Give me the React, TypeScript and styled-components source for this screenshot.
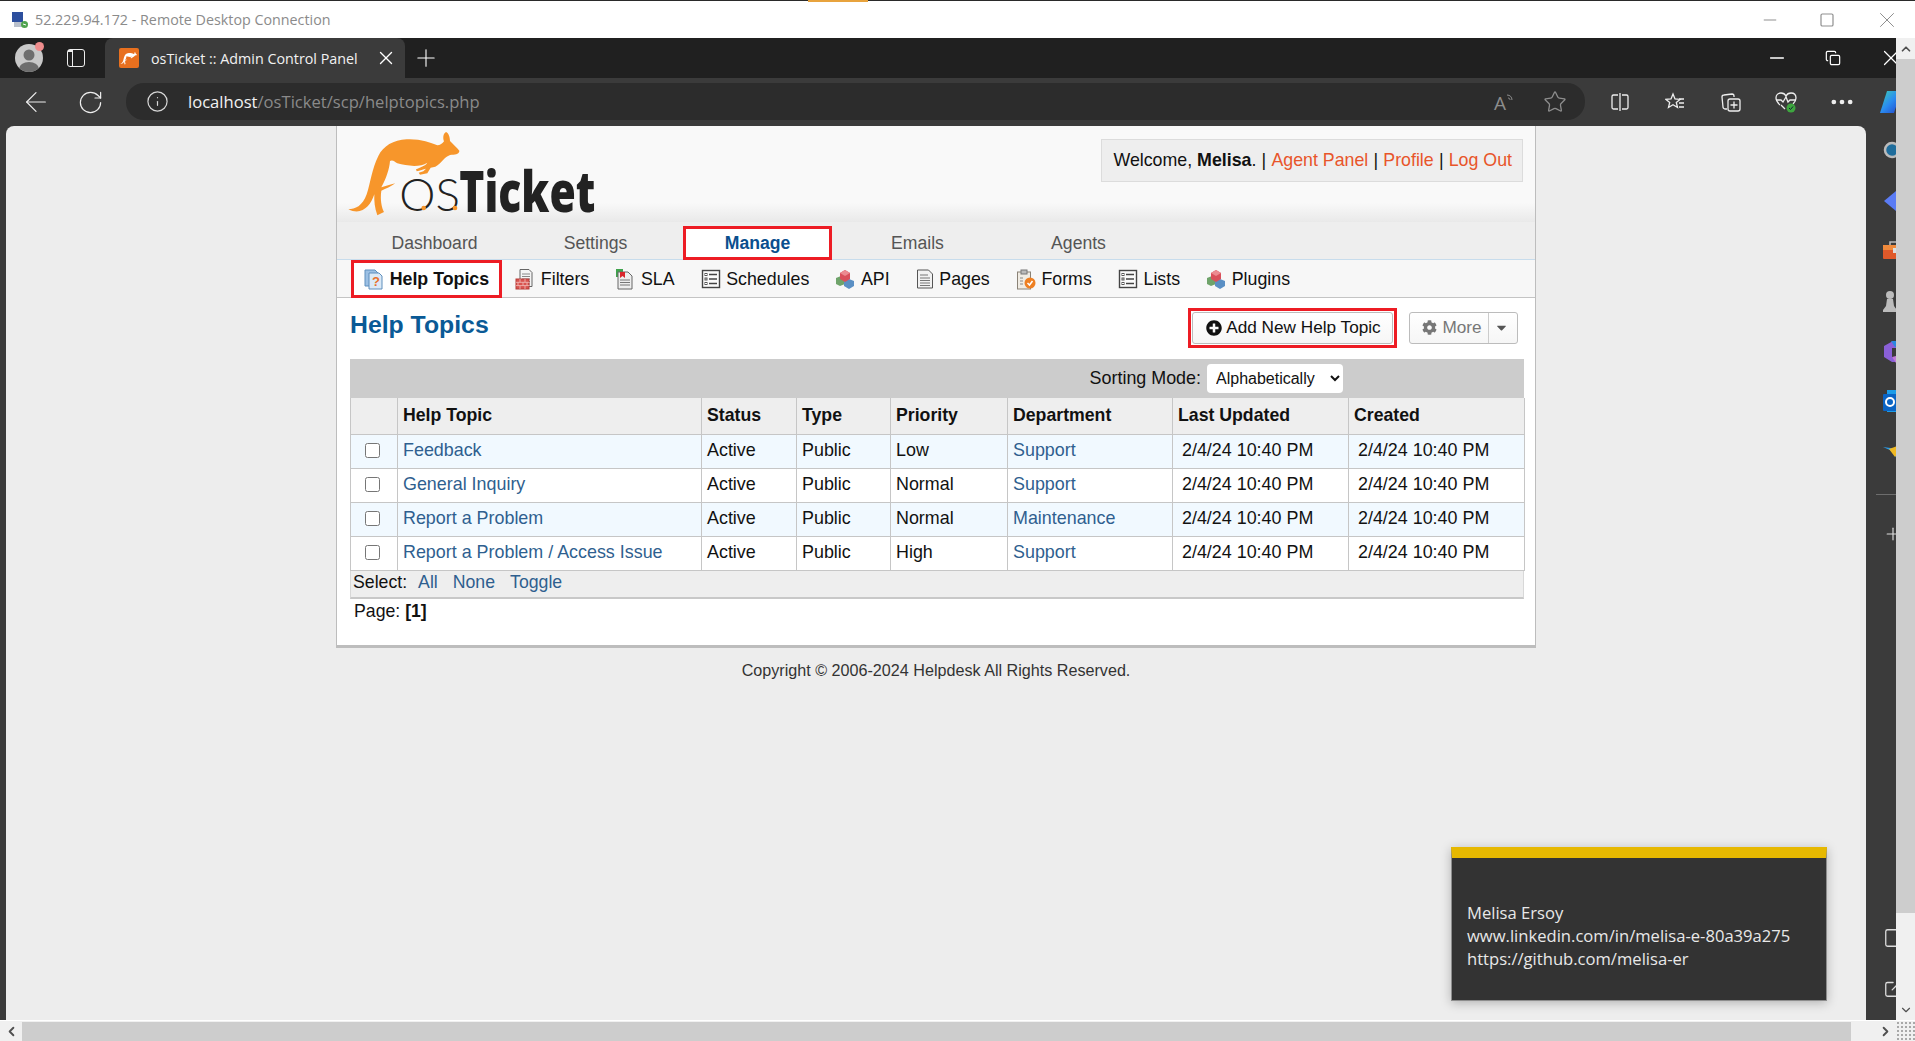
import React from "react";
import styled, { createGlobalStyle } from "styled-components";
import { ArrowLeft, RotateCw, Info, Star, Plus, X, Minus, Square, Copy, ExternalLink, MoreHorizontal, ChevronUp, ChevronDown, ChevronLeft, ChevronRight } from "lucide-react";
import { FaPlusCircle, FaCog, FaCaretDown } from "react-icons/fa";

const GlobalStyle = createGlobalStyle`
  html, body { margin: 0; padding: 0; overflow: hidden; background: #fff; }
  * { box-sizing: border-box; }
`;

const ARIAL = `"Liberation Sans", Arial, sans-serif`;
const SEGOE = `"Open Sans", "Noto Sans", sans-serif`;
const RED = "#ed1c24";
const ROO = "M25 250 C45 250 68 240 80 205 C92 170 95 130 115 90 C130 60 160 42 200 40 C240 38 270 50 292 58 C300 58 308 52 312 46 C308 35 310 22 318 18 C326 20 330 35 330 45 C340 55 350 65 358 74 C358 82 350 86 335 86 C322 88 312 98 300 112 C290 122 282 125 272 125 L262 142 L240 146 L236 140 L250 136 L258 128 C250 130 240 134 230 136 L228 130 C240 124 256 120 262 110 C240 125 200 120 172 112 C165 108 158 100 150 105 C148 130 138 158 124 184 C138 180 150 176 166 172 C152 182 138 188 124 194 C120 220 125 245 132 258 L112 268 C104 245 102 225 103 205 C92 240 65 270 25 250 Z";

const Screen = styled.div`
  width: 1915px;
  height: 1041px;
  display: flex;
  flex-direction: column;
  overflow: hidden;
  position: relative;
  font-family: ${ARIAL};
`;

const TitleBar = styled.div`
  height: 38px;
  flex: none;
  background: #fff;
  border-top: 1px solid #2a2a2a;
  display: flex;
  align-items: center;
  padding: 0 15px 0 11px;
  color: #8b8b8b;
  font-family: ${SEGOE};
  font-size: 14.3px;
  position: relative;
  svg { flex: none; }
`;

const TopGlow = styled.div`
  position: absolute;
  left: 808px;
  top: -1px;
  width: 60px;
  height: 2px;
  background: #e8a33d;
`;

const TitleText = styled.span`
  margin-left: 6px;
  flex: 1;
`;

const WinButtons = styled.div<{ $gap: number; $color: string }>`
  display: flex;
  align-items: center;
  gap: ${(p) => p.$gap}px;
  color: ${(p) => p.$color};
`;

const Middle = styled.div`
  flex: 1;
  display: flex;
  min-height: 0;
`;

const Browser = styled.div`
  flex: 1;
  display: flex;
  flex-direction: column;
  min-width: 0;
  background: #3b3b3b;
`;

const TabStrip = styled.div`
  height: 40px;
  flex: none;
  background: #202020;
  display: flex;
  align-items: center;
  padding-left: 15px;
  color: #fff;
`;

const Avatar = styled.div`
  width: 28px;
  height: 28px;
  border-radius: 50%;
  background: #c9c9c9;
  position: relative;
  overflow: visible;
  flex: none;
  svg { display: block; border-radius: 50%; }
`;

const AvatarDot = styled.span`
  position: absolute;
  right: -1px;
  top: -2px;
  width: 9px;
  height: 9px;
  border-radius: 50%;
  background: #ef8d8d;
`;

const TabsIcon = styled.div`
  width: 18px;
  height: 18px;
  margin-left: 24px;
  border: 1.5px solid #eee;
  border-radius: 3px;
  position: relative;
  flex: none;
  &::before {
    content: "";
    position: absolute;
    left: 0;
    top: 0;
    bottom: 0;
    width: 4px;
    border-right: 1.5px solid #eee;
    border-top: 2px solid #eee;
  }
`;

const Tab = styled.div`
  width: 300px;
  height: 40px;
  margin-left: 20px;
  background: #3b3b3b;
  border-radius: 8px 8px 0 0;
  display: flex;
  align-items: center;
  padding-left: 14px;
  font-family: ${SEGOE};
  font-size: 14.3px;
  flex: none;
`;

const Favicon = styled.div`
  width: 20px;
  height: 20px;
  background: #e8701f;
  border-radius: 2px;
  margin-right: 12px;
  display: flex;
  flex: none;
`;

const TabLabel = styled.span`
  flex: 1;
  color: #f2f2f2;
  white-space: nowrap;
`;

const TabClose = styled.span`
  margin-right: 8px;
  display: flex;
`;

const NewTab = styled.span`
  margin-left: 7px;
  display: flex;
`;

const StripEnd = styled.div`
  flex: 1;
  display: flex;
  justify-content: flex-end;
  overflow: visible;
  margin-right: -8px;
`;

const Toolbar = styled.div`
  height: 48px;
  flex: none;
  display: flex;
  align-items: center;
  color: #eee;
  padding-left: 20px;
  overflow: hidden;
`;

const ToolSlot = styled.span<{ $w: number }>`
  width: ${(p) => p.$w}px;
  flex: none;
  display: flex;
  align-items: center;
`;

const AddressPill = styled.div`
  width: 1459px;
  height: 37px;
  margin-top: -1px;
  flex: none;
  border-radius: 18px;
  background: #2c2c2c;
  display: flex;
  align-items: center;
  padding-left: 20px;
  color: #d8d8d8;
  font-family: ${SEGOE};
  font-size: 16.6px;
`;

const Url = styled.span`
  margin-left: 19px;
  flex: 1;
  color: #8a8a8a;
  strong { color: #f2f2f2; font-weight: 400; }
`;

const PillIcons = styled.div`
  display: flex;
  align-items: center;
  gap: 27px;
  margin-right: 18px;
  color: #8d8d8d;
  svg { overflow: visible; }
`;

const ToolIcons = styled.div`
  display: flex;
  align-items: center;
  margin-left: 7px;
  color: #eee;
  flex: none;
`;

const ToolCell = styled.span`
  width: 55.500px;
  flex: none;
  display: flex;
  align-items: center;
  justify-content: center;
`;

const CopilotSlot = styled.span`
  margin-left: 9px;
  display: flex;
  flex: none;
`;

const Workspace = styled.div`
  flex: 1;
  display: flex;
  min-height: 0;
`;

const Content = styled.main`
  margin-left: 6px;
  width: 1860px;
  flex: none;
  background: #ededed;
  border-radius: 8px 8px 0 0;
  position: relative;
  overflow: hidden;
`;

const Panel = styled.div`
  width: 1200px;
  margin-left: 330px;
  background: #fff;
  border-left: 1px solid #bdbdbd;
  border-right: 1px solid #bdbdbd;
  border-bottom: 3px solid #bdbdbd;
  height: 522px;
`;

const PanelHeader = styled.header`
  height: 96px;
  background: linear-gradient(#f9f9f9 0, #f9f9f9 80%, #e9e9e9 100%);
  display: flex;
  justify-content: space-between;
  align-items: flex-start;
  padding: 0 12px 0 3px;
`;

const LogoSvg = styled.svg`
  width: 270px;
  height: 96px;
  flex: none;
  overflow: visible;
`;

const Welcome = styled.div`
  margin-top: 13px;
  height: 43px;
  background: #eee;
  border: 1px solid #dcdcdc;
  padding: 0 10px 0 11px;
  display: flex;
  align-items: center;
  gap: 5.200px;
  font-size: 17.8px;
  color: #111;
  white-space: pre;
  a { color: #e8552a; text-decoration: none; }
`;

const Nav = styled.nav`
  height: 38px;
  background: #eee;
  border-bottom: 1px solid #c7dcec;
  display: flex;
  padding-left: 17px;
`;

const NavItem = styled.div<{ $active?: boolean }>`
  flex: none;
  width: ${(p) => (p.$active ? 149 : 161)}px;
  height: ${(p) => (p.$active ? 34 : 38)}px;
  margin: ${(p) => (p.$active ? "4px 5px 0 7px" : "0")};
  padding-top: ${(p) => (p.$active ? 0 : 4)}px;
  background: ${(p) => (p.$active ? "#fff" : "transparent")};
  border: ${(p) => (p.$active ? `3px solid ${RED}` : "none")};
  color: ${(p) => (p.$active ? "#0a4f8e" : "#555")};
  font-weight: ${(p) => (p.$active ? 700 : 400)};
  font-size: 17.6px;
  display: flex;
  align-items: center;
  justify-content: center;
`;

const SubNav = styled.nav`
  height: 38px;
  background: #f7f7f7;
  border-bottom: 1px solid #c4c4c4;
  display: flex;
  padding-left: 14px;
`;

const SubItem = styled.div<{ $active?: boolean }>`
  display: flex;
  align-items: center;
  gap: 5.700px;
  height: 38px;
  padding: 0 10px;
  border: 3px solid ${(p) => (p.$active ? RED : "transparent")};
  background: ${(p) => (p.$active ? "#fff" : "transparent")};
  font-size: 17.8px;
  font-weight: ${(p) => (p.$active ? 700 : 400)};
  color: #111;
  svg { flex: none; }
`;

const Body = styled.div`
  padding: 0 11px 0 13px;
`;

const TitleRow = styled.div`
  height: 61px;
  display: flex;
  align-items: center;
  padding: 0 6px 2px 0;
`;

const Heading = styled.h1`
  margin: 0 auto 6px 0;
  font-size: 24.8px;
  line-height: 30px;
  color: #0a5a96;
  font-weight: 700;
`;

const AddFrame = styled.div`
  border: 3px solid ${RED};
  padding: 1px;
  margin-right: 12px;
  background: #fff;
`;

const ActionButton = styled.button`
  height: 32px;
  border: 1px solid #bcbcbc;
  border-radius: 3px;
  background: linear-gradient(#fff, #f6f6f6);
  font-family: ${ARIAL};
  font-size: 17.2px;
  display: flex;
  align-items: center;
  padding: 0;
`;

const AddButton = styled(ActionButton)`
  width: 201px;
  justify-content: center;
  gap: 4px;
  color: #111;
  padding-left: 2px;
`;

const MoreButton = styled(ActionButton)`
  width: 109px;
  color: #777;
`;

const MoreLabel = styled.span`
  width: 79px;
  height: 100%;
  display: flex;
  align-items: center;
  justify-content: center;
  gap: 5px;
  padding-left: 6px;
  border-right: 1px solid #ccc;
`;

const MoreCaret = styled.span`
  flex: 1;
  display: flex;
  justify-content: center;
  padding-right: 4px;
  color: #555;
`;

const SortBar = styled.div`
  height: 39px;
  background: #ccc;
  display: flex;
  align-items: center;
  justify-content: flex-end;
  gap: 6px;
  padding-right: 181px;
  font-size: 17.9px;
  color: #111;
`;

const SortSelect = styled.select`
  width: 136px;
  height: 29px;
  border: none;
  border-radius: 4px;
  background: #fff;
  font-family: ${ARIAL};
  font-size: 16px;
  color: #111;
  padding-left: 5px;
`;

const Table = styled.table`
  width: 1174px;
  table-layout: fixed;
  border-collapse: collapse;
  font-size: 17.9px;
  color: #111;
`;

const Th = styled.th`
  height: 36px;
  background: #eee;
  border: 1px solid #c6c6c6;
  border-top: none;
  text-align: left;
  padding: 0 5px;
  font-size: 17.7px;
  font-weight: 700;
`;

const Tr = styled.tr<{ $tint?: boolean }>`
  background: ${(p) => (p.$tint ? "#f1f9ff" : "#fff")};
`;

const Td = styled.td<{ $inset?: boolean }>`
  height: 34px;
  border: 1px solid #c6c6c6;
  padding: 0 0 1px ${(p) => (p.$inset ? 9 : 5)}px;
  white-space: nowrap;
`;

const CheckCell = styled.td`
  height: 34px;
  border: 1px solid #c6c6c6;
  text-align: center;
  padding: 0 4px 0 0;
  input { width: 15px; height: 15px; margin: 3px 0 0; display: inline-block; }
`;

const CellLink = styled.a`
  color: #2f5f8f;
  text-decoration: none;
`;

const SelectBar = styled.div`
  height: 28px;
  background: #eee;
  border: 1px solid #d8d8d8;
  border-top: none;
  border-bottom: 2px solid #c8c8c8;
  display: flex;
  align-items: center;
  padding: 0 0 2px 2px;
  font-size: 17.7px;
  color: #111;
`;

const SelectLink = styled(CellLink)<{ $left: number }>`
  margin-left: ${(p) => p.$left}px;
`;

const Pager = styled.div`
  padding: 0 0 0 4px;
  font-size: 17.7px;
  line-height: 24px;
  color: #111;
`;

const Copyright = styled.footer`
  width: 1200px;
  margin: 12px 0 0 330px;
  text-align: center;
  font-size: 16.150px;
  line-height: 20px;
  color: #333;
`;

const Toast = styled.aside`
  position: absolute;
  right: 39px;
  bottom: 19px;
  width: 376px;
  height: 154px;
  background: #333;
  border: 1px solid #8d8d8d;
  border-top: 11px solid #e6b800;
  box-shadow: 0 2px 10px rgba(0, 0, 0, 0.25);
  padding: 43px 0 0 15px;
  color: #e8e8e8;
  font-family: ${SEGOE};
  font-size: 16.6px;
  line-height: 23px;
  white-space: nowrap;
`;

const Sidebar = styled.aside`
  flex: 1;
  display: flex;
  flex-direction: column;
  align-items: flex-start;
  padding: 13px 0 21px 17px;
  gap: 24px;
  overflow: hidden;
  color: #ddd;
  min-width: 0;
  svg { flex: none; display: block; }
`;

const SideRule = styled.div`
  width: 20px;
  height: 1px;
  flex: none;
  background: #6d6d6d;
  margin: 5px 0 5px -7px;
`;

const SidePush = styled.div`
  margin-top: auto;
  display: flex;
  flex-direction: column;
  gap: 28px;
`;

const VScroll = styled.div`
  width: 19px;
  flex: none;
  background: #f0f0f0;
  display: flex;
  flex-direction: column;
  align-items: center;
  color: #505050;
`;

const ScrollArrow = styled.div`
  height: 21px;
  flex: none;
  display: flex;
  align-items: center;
  justify-content: center;
`;

const VThumb = styled.div`
  width: 100%;
  height: 854px;
  background: #cdcdcd;
`;

const VSpace = styled.div`
  flex: 1;
`;

const HScroll = styled.div`
  height: 21px;
  flex: none;
  background: #f0f0f0;
  border-top: 1px solid #fff;
  display: flex;
  align-items: center;
  color: #505050;
`;

const HThumb = styled.div`
  width: 1829px;
  height: 19px;
  background: #cdcdcd;
`;

const HArrow = styled.div`
  width: 22px;
  flex: none;
  display: flex;
  align-items: center;
  justify-content: center;
`;

const HArrowEnd = styled.div`
  width: 45px;
  flex: none;
  display: flex;
  justify-content: flex-end;
  padding-right: 3px;
`;

const Grip = styled.div`
  flex: 1;
  height: 100%;
  background-image: radial-gradient(#a8a8a8 1.2px, transparent 1.4px);
  background-size: 4px 4px;
`;

const Logo = () => (
  <LogoSvg viewBox="0 0 810 288">
    <path d={ROO} fill="#f7962b" />
    <text x="178" y="256" fontFamily="Lato, sans-serif" fontWeight="300" fontSize="134" fill="#222" textLength="182" lengthAdjust="spacingAndGlyphs">OS</text>
    <circle cx="251" cy="246" r="7" fill="#f7962b" />
    <circle cx="345" cy="246" r="7" fill="#f7962b" />
    <text x="358" y="258" fontFamily="Open Sans, sans-serif" fontWeight="800" fontSize="170" fill="#222" textLength="408" lengthAdjust="spacingAndGlyphs">Ticket</text>
  </LogoSvg>
);

const DocBase = () => (
  <>
    <path d="M5 1.5h9l3 3v14H5z" fill="#f4f4f4" stroke="#666" />
    <path d="M7 6h8M7 8.5h8M7 11h8M7 13.5h8M7 16h8" stroke="#888" />
  </>
);

const HelpIcon = () => (
  <svg width="20" height="22" viewBox="0 0 20 22">
    <path d="M1 2h10l3 3v13H1z" fill="#9cc0e4" stroke="#5f8fbd" />
    <path d="M5 5h10l3 3v13H5z" fill="#dbe9f6" stroke="#5f8fbd" />
    <text x="8" y="18" fontFamily="Liberation Sans, sans-serif" fontWeight="700" fontSize="13" fill="#e8702a">?</text>
  </svg>
);

const FilterIcon = () => (
  <svg width="20" height="22" viewBox="0 0 20 22">
    <DocBase />
    <rect x="1" y="11" width="13" height="10" fill="#d9534f" stroke="#b53c38" />
    <path d="M1 14.3h13M1 17.6h13M5 11v3.3M10 11v3.3M3 14.3v3.3M8 14.3v3.3M12 14.3v3.3M5 17.6V21M10 17.6V21" stroke="#f2c0bd" strokeWidth=".8" />
  </svg>
);

const SlaIcon = () => (
  <svg width="20" height="22" viewBox="0 0 20 22">
    <path d="M1 1h7v8H1z" fill="#3fa34d" />
    <path d="M3 4h10l4 4v13H3z" fill="#eee" stroke="#666" />
    <path d="M5 12h10M5 14.5h10M5 17h10" stroke="#777" />
    <path d="M5 4h5v6l-2.500-2L5 10z" fill="#d9262c" />
  </svg>
);

const ListIcon = () => (
  <svg width="20" height="20" viewBox="0 0 20 20">
    <rect x="1.500" y="1.500" width="17" height="17" fill="#fafafa" stroke="#444" strokeWidth="1.400" />
    <path d="M8 5.500h8M8 10h8M8 14.500h8" stroke="#444" strokeWidth="1.400" />
    <rect x="4" y="4.500" width="2" height="2" fill="none" stroke="#555" />
    <rect x="4" y="9" width="2" height="2" fill="none" stroke="#555" />
    <rect x="4" y="13.500" width="2" height="2" fill="none" stroke="#555" />
  </svg>
);

const CubesIcon = () => (
  <svg width="20" height="20" viewBox="0 0 20 20">
    <path d="M1 9l5-2 4 2v6l-5 2-4-2z" fill="#6fa36a" />
    <path d="M9 12l5-2 5 2v5l-5 3-5-3z" fill="#5a8fc4" />
    <path d="M5 4l5-3 5 3v6l-5 3-5-3z" fill="#d9505a" />
    <path d="M5 4l5 3 5-3-5-3z" fill="#ec8b90" />
  </svg>
);

const PageIcon = () => (
  <svg width="18" height="20" viewBox="0 0 18 20">
    <path d="M1.500 1h11l4 4v14h-15z" fill="#f2f2f2" stroke="#555" />
    <path d="M4 6h8M4 9h10M4 11.500h10M4 14h10M4 16.500h10" stroke="#777" />
  </svg>
);

const FormIcon = () => (
  <svg width="20" height="21" viewBox="0 0 20 21">
    <rect x="1.500" y="3" width="13" height="17" fill="#f0ece4" stroke="#8a8276" />
    <rect x="5" y="1" width="6" height="4" fill="#bbb" stroke="#777" />
    <path d="M4 9h3M4 12h3M4 15h3" stroke="#888" />
    <circle cx="14" cy="14" r="5.500" fill="#ee7f22" />
    <path d="M11.500 14l2 2 3-4" stroke="#fff" strokeWidth="1.500" fill="none" />
  </svg>
);

const ReadAloud = () => (
  <svg width="22" height="20" viewBox="0 0 22 20" fill="none" stroke="currentColor">
    <text x="0" y="18" fontFamily="Open Sans, sans-serif" fontSize="19" fill="currentColor" stroke="none">A</text>
    <path d="M13 3c3 0 5 2 5 5M14 6c1.500 0 2 1 2 2" />
  </svg>
);

const SplitIcon = () => (
  <svg width="20" height="20" viewBox="0 0 20 20" fill="none" stroke="currentColor" strokeWidth="1.300">
    <path d="M8 3H3.500A1.500 1.500 0 0 0 2 4.500v11A1.500 1.500 0 0 0 3.500 17H8M12 3h4.500A1.500 1.500 0 0 1 18 4.500v11a1.500 1.500 0 0 1-1.500 1.500H12M10 1v18" />
  </svg>
);

const FavIcon = () => (
  <svg width="20" height="20" viewBox="0 0 20 20" fill="none" stroke="currentColor" strokeWidth="1.300">
    <path d="M8 2l2 5 5 .4-3.700 3.100 1.200 5L8 12.800 3.500 15.500l1.200-5L1 7.400 6 7z" />
    <path d="M14 7h5M14 11h5M14 15h5" />
  </svg>
);

const CollectionIcon = () => (
  <svg width="20" height="20" viewBox="0 0 20 20" fill="none" stroke="currentColor" strokeWidth="1.300">
    <path d="M6 17H4a2 2 0 0 1-2-2L1 5a2 2 0 0 1 2-2l8-1a2 2 0 0 1 2 2v1" />
    <rect x="7" y="7" width="12" height="12" rx="2" />
    <path d="M13 9.500v7M9.500 13h7" />
  </svg>
);

const HealthIcon = () => (
  <svg width="22" height="22" viewBox="0 0 22 22" fill="none" stroke="currentColor" strokeWidth="1.300">
    <path d="M5 14C2 11 1 9 1 7c0-3 2-5 5-5 2 0 4 1 5 3 1-2 3-3 5-3 3 0 5 2 5 5 0 2-1 4-3 6" />
    <path d="M1 9h5l2 2 3-5 2 5 2-2h5M6 14l4 4" />
    <circle cx="16" cy="17" r="4.500" fill="#3ea63f" stroke="none" />
    <path d="M14 17l1.500 1.500 2.500-3" stroke="#123" strokeWidth="1" />
  </svg>
);

const CopilotIcon = () => (
  <svg width="26" height="26" viewBox="0 0 26 26">
    <defs>
      <linearGradient id="cop" x1="0" y1="0" x2="1" y2="1">
        <stop offset="0" stopColor="#3fd0b0" />
        <stop offset="0.5" stopColor="#2a8cf0" />
        <stop offset="1" stopColor="#2340c8" />
      </linearGradient>
    </defs>
    <path d="M8 2h14l-7 22H1z" fill="url(#cop)" />
  </svg>
);

const SideSearch = () => (
  <svg width="26" height="26" viewBox="0 0 26 26">
    <circle cx="9" cy="11" r="7" fill="#1f6d9c" stroke="#bbb" strokeWidth="2.500" />
    <path d="M14 16l6 6" stroke="#a070d0" strokeWidth="3" />
  </svg>
);

const SideDiamond = () => (
  <svg width="26" height="26" viewBox="0 0 26 26">
    <path d="M1 12L13 2l10 10-10 10z" fill="#5b7cf5" />
  </svg>
);

const SideToolbox = () => (
  <svg width="26" height="26" viewBox="0 0 26 26">
    <path d="M7 7V3h12v4" fill="none" stroke="#bbb" strokeWidth="1.500" />
    <rect x="0" y="6" width="26" height="14" rx="1" fill="#e0592a" />
    <rect x="0" y="6" width="26" height="5" fill="#f08a3c" />
    <rect x="10" y="9" width="3" height="5" fill="#ddd" />
  </svg>
);

const SidePawn = () => (
  <svg width="26" height="26" viewBox="0 0 26 26">
    <circle cx="7" cy="6" r="4" fill="#bcbcbc" />
    <path d="M4 10h6l1 7 3 4v2H0v-2l3-4z" fill="#bcbcbc" />
    <path d="M14 2v6" stroke="#a070d0" strokeWidth="2" />
  </svg>
);

const SideCopilot = () => (
  <svg width="26" height="26" viewBox="0 0 26 26">
    <path d="M1 7l9-5h6v7h-7v9l6 5H9l-8-5z" fill="#8a60d8" />
    <path d="M9 18l8-2 2 3-6 5z" fill="#c27ad8" />
    <path d="M8 2h12v6h-8z" fill="#2b88e0" />
  </svg>
);

const SideOutlook = () => (
  <svg width="26" height="26" viewBox="0 0 26 26">
    <rect x="4" y="1" width="22" height="22" fill="#1c9ce8" />
    <rect x="0" y="5" width="18" height="17" rx="1" fill="#0a64c4" />
    <circle cx="7" cy="13" r="4" fill="none" stroke="#fff" strokeWidth="2" />
  </svg>
);

const SidePlane = () => (
  <svg width="26" height="26" viewBox="0 0 26 26">
    <path d="M0 8l14 2 8-6-8 16-5-8z" fill="#2b9be8" />
    <path d="M6 10l16-6-10 14z" fill="#f0b923" />
  </svg>
);

const RemoteIcon = () => (
  <svg width="18" height="18" viewBox="0 0 18 18">
    <rect x="1" y="1" width="11" height="10" fill="#2d4f9e" />
    <rect x="3" y="11" width="9" height="5" fill="#b9c0cc" />
    <circle cx="13.500" cy="13.500" r="3.500" fill="#4fa34e" />
    <path d="M12 13l3 1" stroke="#fff" />
  </svg>
);

const navItems = ["Dashboard", "Settings", "Manage", "Emails", "Agents"];

const subItems: { label: string; icon: React.ReactNode; active?: boolean }[] = [
  { label: "Help Topics", icon: <HelpIcon />, active: true },
  { label: "Filters", icon: <FilterIcon /> },
  { label: "SLA", icon: <SlaIcon /> },
  { label: "Schedules", icon: <ListIcon /> },
  { label: "API", icon: <CubesIcon /> },
  { label: "Pages", icon: <PageIcon /> },
  { label: "Forms", icon: <FormIcon /> },
  { label: "Lists", icon: <ListIcon /> },
  { label: "Plugins", icon: <CubesIcon /> },
];

const columns = [47, 304, 95, 94, 117, 165, 176, 176];
const headers = ["", "Help Topic", "Status", "Type", "Priority", "Department", "Last Updated", "Created"];

const topics = [
  { name: "Feedback", priority: "Low", dept: "Support" },
  { name: "General Inquiry", priority: "Normal", dept: "Support" },
  { name: "Report a Problem", priority: "Normal", dept: "Maintenance" },
  { name: "Report a Problem / Access Issue", priority: "High", dept: "Support" },
];

const STAMP = "2/4/24 10:40 PM";

export default function App() {
  return (
    <Screen>
      <GlobalStyle />
      <TitleBar>
        <TopGlow />
        <RemoteIcon />
        <TitleText>52.229.94.172 - Remote Desktop Connection</TitleText>
        <WinButtons $gap={39} $color="#8f8f8f">
          <Minus size={20} strokeWidth={1} absoluteStrokeWidth />
          <Square size={16} strokeWidth={1.2} absoluteStrokeWidth />
          <X size={26} strokeWidth={1} absoluteStrokeWidth />
        </WinButtons>
      </TitleBar>
      <Middle>
        <Browser>
          <TabStrip>
            <Avatar>
              <svg width="28" height="28" viewBox="0 0 28 28">
                <circle cx="14" cy="11" r="5.500" fill="#6e6e6e" />
                <ellipse cx="14" cy="25" rx="10" ry="7" fill="#6e6e6e" />
              </svg>
              <AvatarDot />
            </Avatar>
            <TabsIcon />
            <Tab>
              <Favicon>
                <svg width="20" height="20" viewBox="0 0 400 280">
                  <path d={ROO} fill="#fff" />
                </svg>
              </Favicon>
              <TabLabel>osTicket :: Admin Control Panel</TabLabel>
              <TabClose><X size={22} strokeWidth={1.4} absoluteStrokeWidth /></TabClose>
            </Tab>
            <NewTab><Plus size={28} strokeWidth={1.1} absoluteStrokeWidth /></NewTab>
            <StripEnd>
              <WinButtons $gap={37} $color="#fff">
                <Minus size={22} strokeWidth={1.3} absoluteStrokeWidth />
                <Copy size={16} strokeWidth={1.2} absoluteStrokeWidth />
                <X size={26} strokeWidth={1.2} absoluteStrokeWidth />
              </WinButtons>
            </StripEnd>
          </TabStrip>
          <Toolbar>
            <ToolSlot $w={57}><ArrowLeft size={32} strokeWidth={1.2} absoluteStrokeWidth /></ToolSlot>
            <ToolSlot $w={49}><RotateCw size={27} strokeWidth={1.2} absoluteStrokeWidth /></ToolSlot>
            <AddressPill>
              <Info size={23} strokeWidth={1.2} absoluteStrokeWidth />
              <Url><strong>localhost</strong>/osTicket/scp/helptopics.php</Url>
              <PillIcons>
                <ReadAloud />
                <Star size={24} strokeWidth={1.3} absoluteStrokeWidth />
              </PillIcons>
            </AddressPill>
            <ToolIcons>
              <ToolCell><SplitIcon /></ToolCell>
              <ToolCell><FavIcon /></ToolCell>
              <ToolCell><CollectionIcon /></ToolCell>
              <ToolCell><HealthIcon /></ToolCell>
              <ToolCell><MoreHorizontal size={28} strokeWidth={2.4} absoluteStrokeWidth /></ToolCell>
              <CopilotSlot><CopilotIcon /></CopilotSlot>
            </ToolIcons>
          </Toolbar>
          <Workspace>
            <Content>
              <Panel>
                <PanelHeader>
                  <Logo />
                  <Welcome>
                    <span>Welcome, <b>Melisa</b>.</span>
                    <span>|</span>
                    <a>Agent Panel</a>
                    <span>|</span>
                    <a>Profile</a>
                    <span>|</span>
                    <a>Log Out</a>
                  </Welcome>
                </PanelHeader>
                <Nav>
                  {navItems.map((item) => (
                    <NavItem key={item} $active={item === "Manage"}>{item}</NavItem>
                  ))}
                </Nav>
                <SubNav>
                  {subItems.map((item) => (
                    <SubItem key={item.label} $active={item.active}>
                      {item.icon}
                      <span>{item.label}</span>
                    </SubItem>
                  ))}
                </SubNav>
                <Body>
                  <TitleRow>
                    <Heading>Help Topics</Heading>
                    <AddFrame>
                      <AddButton><FaPlusCircle size={16} /> Add New Help Topic</AddButton>
                    </AddFrame>
                    <MoreButton>
                      <MoreLabel><FaCog size={15} /> More</MoreLabel>
                      <MoreCaret><FaCaretDown size={15} /></MoreCaret>
                    </MoreButton>
                  </TitleRow>
                  <SortBar>
                    <span>Sorting Mode:</span>
                    <SortSelect defaultValue="a">
                      <option value="a">Alphabetically</option>
                    </SortSelect>
                  </SortBar>
                  <Table>
                    <colgroup>
                      {columns.map((w, i) => <col key={i} width={w} />)}
                    </colgroup>
                    <thead>
                      <tr>
                        {headers.map((h, i) => <Th key={i}>{h}</Th>)}
                      </tr>
                    </thead>
                    <tbody>
                      {topics.map((t, i) => (
                        <Tr key={t.name} $tint={i % 2 === 0}>
                          <CheckCell><input type="checkbox" /></CheckCell>
                          <Td><CellLink>{t.name}</CellLink></Td>
                          <Td>Active</Td>
                          <Td>Public</Td>
                          <Td>{t.priority}</Td>
                          <Td><CellLink>{t.dept}</CellLink></Td>
                          <Td $inset>{STAMP}</Td>
                          <Td $inset>{STAMP}</Td>
                        </Tr>
                      ))}
                    </tbody>
                  </Table>
                  <SelectBar>
                    <span>Select:</span>
                    <SelectLink $left={11}>All</SelectLink>
                    <SelectLink $left={15}>None</SelectLink>
                    <SelectLink $left={15}>Toggle</SelectLink>
                  </SelectBar>
                  <Pager>Page: <b>[1]</b></Pager>
                </Body>
              </Panel>
              <Copyright>Copyright © 2006-2024 Helpdesk All Rights Reserved.</Copyright>
              <Toast>
                Melisa Ersoy<br />
                www.linkedin.com/in/melisa-e-80a39a275<br />
                https://github.com/melisa-er
              </Toast>
            </Content>
            <Sidebar>
              <SideSearch />
              <SideDiamond />
              <SideToolbox />
              <SidePawn />
              <SideCopilot />
              <SideOutlook />
              <SidePlane />
              <SideRule />
              <Plus size={20} strokeWidth={1.4} />
              <SidePush>
                <Square size={22} strokeWidth={1.4} />
                <ExternalLink size={22} strokeWidth={1.4} />
              </SidePush>
            </Sidebar>
          </Workspace>
        </Browser>
        <VScroll>
          <ScrollArrow><ChevronUp size={14} strokeWidth={3} /></ScrollArrow>
          <VThumb />
          <VSpace />
          <ScrollArrow><ChevronDown size={14} strokeWidth={2} /></ScrollArrow>
        </VScroll>
      </Middle>
      <HScroll>
        <HArrow><ChevronLeft size={15} strokeWidth={3} /></HArrow>
        <HThumb />
        <HArrowEnd><ChevronRight size={15} strokeWidth={3} /></HArrowEnd>
        <Grip />
      </HScroll>
    </Screen>
  );
}
